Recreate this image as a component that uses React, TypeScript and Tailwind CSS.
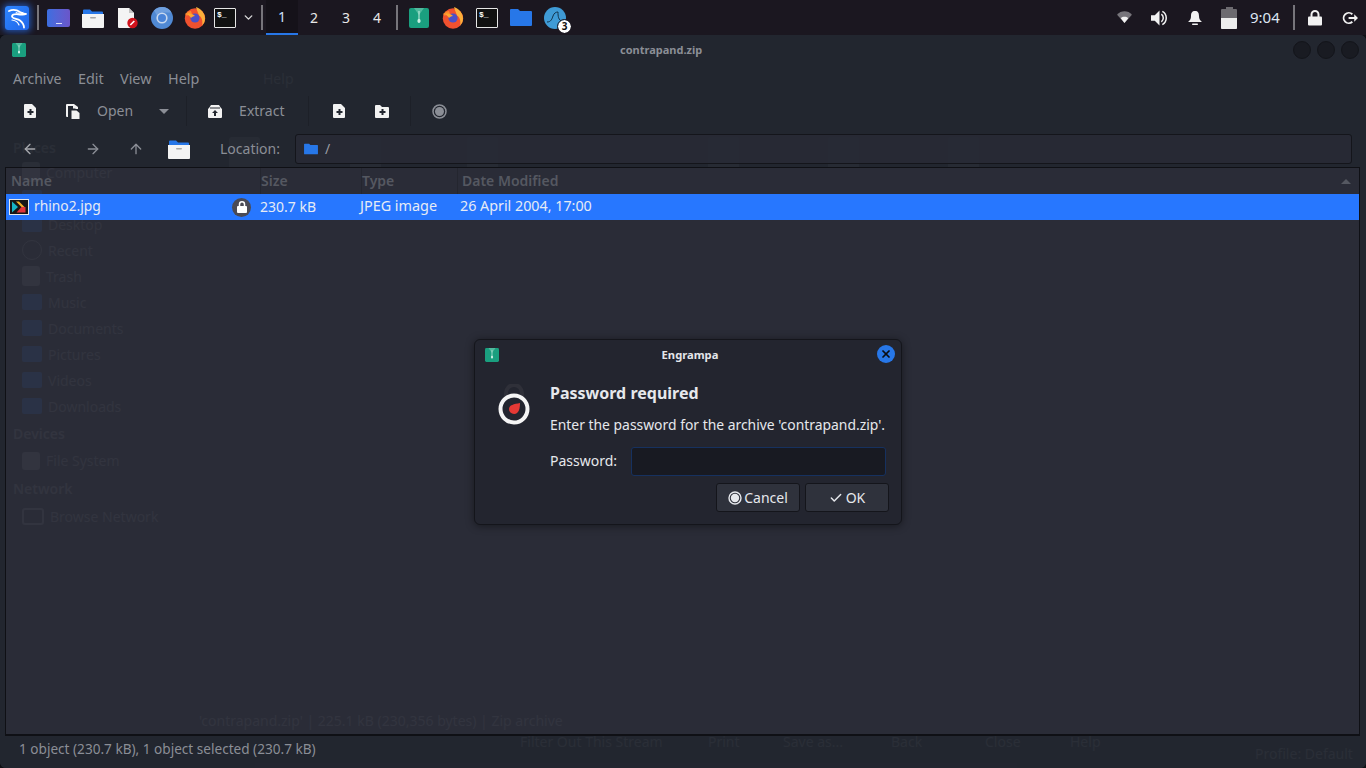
import { ArrowLeft, ArrowRight, ArrowUp, Check, ChevronDown, X } from "lucide-react";

const sidebarGhost = [
  { label: "Computer", icon: "file" },
  { label: "", icon: "folder" },
  { label: "Desktop", icon: "folder" },
  { label: "Recent", icon: "circle" },
  { label: "Trash", icon: "file" },
  { label: "Music", icon: "folder" },
  { label: "Documents", icon: "folder" },
  { label: "Pictures", icon: "folder" },
  { label: "Videos", icon: "folder" },
  { label: "Downloads", icon: "folder" },
];

const ghostDocs = ["left-[229px]", "left-[350px]", "left-[467px]", "left-[708px]", "left-[828px]", "left-[948px]"];

function KaliLogo() {
  return (
    <div className="w-6 h-6 rounded-[3px] bg-gradient-to-br from-[#2f86ff] to-[#1f66ea] shadow-[0_0_6px_2px_rgba(39,119,255,0.6)] flex items-center justify-center">
      <svg width="22" height="22" viewBox="0 0 22 22" fill="none" stroke="#fff" strokeWidth="1.8" strokeLinecap="round" strokeLinejoin="round">
        <path d="M3 4c4-2 8-1 11 1 2 1 3 2 6 2-2 1-4 .5-6 .5-3-.5-7-1-8 1.500-.5 3 5 2.500 8 4.500 2.500 2 4 4 4 7" />
        <path d="M10 5.500c2 1 5 1 7 0" strokeWidth="1" />
        <path d="M6 13c3 .5 6 2 7 5" strokeWidth="1.200" />
      </svg>
    </div>
  );
}

function MonitorIcon() {
  return (
    <div className="w-[23px] h-[18px] rounded-[2px] bg-gradient-to-r from-[#3b6ee0] to-[#6a56c9] flex items-end justify-center">
      <span className="w-[6px] h-[1px] mb-[3px] bg-white/80" />
    </div>
  );
}

function FilesIcon({ size = 22 }: { size?: number }) {
  return (
    <svg width={size} height={size} viewBox="0 0 22 22">
      <path d="M1 3.500a1 1 0 0 1 1-1h6l2 2h10a1 1 0 0 1 1 1V9H1z" fill="#2777e8" />
      <path d="M0 7h22v13a1 1 0 0 1-1 1H1a1 1 0 0 1-1-1z" fill="#f4f4f4" />
      <rect x="8" y="10" width="6" height="1.600" rx="0.800" fill="#a8a8a8" />
    </svg>
  );
}

function RedDocIcon() {
  return (
    <svg width="22" height="22" viewBox="0 0 22 22">
      <path d="M1 1h11l5 5v15H2a1 1 0 0 1-1-1z" fill="#f4f4f4" />
      <path d="M12 1l5 5h-5z" fill="#c4c4c4" />
      <circle cx="15.500" cy="16" r="5.200" fill="#d0121b" />
      <path d="M13.300 18l4-4" stroke="#fff" strokeWidth="1.600" />
    </svg>
  );
}

function ChromiumIcon() {
  return (
    <svg width="22" height="22" viewBox="0 0 22 22">
      <circle cx="11" cy="11" r="11" fill="#5089d4" />
      <path d="M11 0a11 11 0 0 1 9.500 5.500H11a5.500 5.500 0 0 0-5 3L3 3.600A11 11 0 0 1 11 0z" fill="#6f9fde" />
      <circle cx="11" cy="11" r="5.600" fill="#c9d9ef" />
      <circle cx="11" cy="11" r="4" fill="#4a84d8" />
    </svg>
  );
}

function FirefoxIcon() {
  return (
    <svg width="22" height="23" viewBox="0 0 22 23">
      <circle cx="11" cy="12.500" r="10.200" fill="#f0512f" />
      <path d="M12 1c5 2 9 6 9 11.500 0 3-1 5-3 7 1-4 0-8-3-10-1-3-2-5-3-8.500z" fill="#fbb03a" />
      <path d="M1 8c2-2 4-3 6-3l1 3C6 8 4 8 3 10z" fill="#fb8a2c" />
      <circle cx="11" cy="12" r="4.600" fill="#4a50c8" />
      <path d="M3 8c3-1 6 0 8 2-2 0-3 1-4 2-1-2-3-3-4-4z" fill="#ffa62e" />
    </svg>
  );
}

function TerminalIcon() {
  return (
    <div className="w-[22px] h-[20px] bg-[#111] border border-[#e6e6e6] rounded-[1px] flex items-start pl-[2px] pt-[1px]">
      <span className="font-['Liberation_Mono',monospace] font-bold text-[8px] leading-[9px] text-white">$_</span>
    </div>
  );
}

function ZipIcon({ size = 20 }: { size?: number }) {
  return (
    <svg width={size} height={size} viewBox="0 0 20 20">
      <rect width="20" height="20" rx="2" fill="#1a9f7f" />
      <path d="M5 0l5 7 5-7z" fill="#7fd0b8" opacity="0.550" />
      <rect x="9" y="3" width="2" height="9" fill="#c9efe3" opacity="0.500" />
      <rect x="8.500" y="11" width="3" height="4" rx="1.400" fill="#c9efe3" />
    </svg>
  );
}

function FolderBlue({ w = 22, h = 19 }: { w?: number; h?: number }) {
  return (
    <svg width={w} height={h} viewBox="0 0 22 19">
      <path d="M0 2a1 1 0 0 1 1-1h7l2 2h11a1 1 0 0 1 1 1v13a1 1 0 0 1-1 1H1a1 1 0 0 1-1-1z" fill="#2777e8" />
    </svg>
  );
}

function SharkIcon() {
  return (
    <div className="relative w-[22px] h-[22px]">
      <svg width="22" height="22" viewBox="0 0 22 22">
        <circle cx="11" cy="11" r="11" fill="#3f9bd6" />
        <path d="M3 15c4 0 5-3 6-6s3-4 5-4c0 4 0 8 5 10" fill="none" stroke="#12324a" strokeWidth="1" />
      </svg>
      <span className="absolute -right-[5px] -bottom-[4px] w-[13px] h-[13px] rounded-full bg-white outline outline-1 outline-[#1b1720] text-[#111] text-[10px] font-bold leading-[13px] text-center">3</span>
    </div>
  );
}

function Sep() {
  return <div className="w-[2px] h-[25px] bg-[#77757b]" />;
}

function Slot({ w, children }: { w: string; children: React.ReactNode }) {
  return <div className={`${w} flex items-center justify-center shrink-0`}>{children}</div>;
}

function TopPanel() {
  return (
    <div className="h-[35px] bg-[#1b1720] flex items-center text-[#e8e8e8] shrink-0">
      <Slot w="w-[34px]"><KaliLogo /></Slot>
      <Slot w="w-[8px]"><Sep /></Slot>
      <Slot w="w-[33px]"><MonitorIcon /></Slot>
      <Slot w="w-[36px]"><FilesIcon /></Slot>
      <Slot w="w-[34px]"><RedDocIcon /></Slot>
      <Slot w="w-[33px]"><ChromiumIcon /></Slot>
      <Slot w="w-[34px]"><FirefoxIcon /></Slot>
      <Slot w="w-[26px]"><TerminalIcon /></Slot>
      <Slot w="w-[20px]"><ChevronDown size={13} strokeWidth={2.6} className="text-[#d8d8d8]" /></Slot>
      <Slot w="w-[8px]"><Sep /></Slot>
      <div className="w-[32px] h-[35px] bg-[#151219] border-b-2 border-[#2777e8] flex items-center justify-center text-[14px] text-[#cfe0ff]">1</div>
      <div className="w-[32px] text-center text-[14px]">2</div>
      <div className="w-[32px] text-center text-[14px]">3</div>
      <div className="w-[30px] text-center text-[14px]">4</div>
      <Slot w="w-[10px]"><Sep /></Slot>
      <Slot w="w-[34px]"><ZipIcon /></Slot>
      <Slot w="w-[34px]"><FirefoxIcon /></Slot>
      <Slot w="w-[34px]"><TerminalIcon /></Slot>
      <Slot w="w-[34px]"><FolderBlue /></Slot>
      <Slot w="w-[34px]"><SharkIcon /></Slot>

      <div className="ml-auto flex items-center">
        <svg width="15" height="13" viewBox="0 0 16 14" className="mr-[19px]">
          <path d="M0 4C4-1 12-1 16 4L8 13z" fill="#77757b" />
          <path d="M4 7.800c2-2 6-2 8 0L8 13z" fill="#f2f2f2" />
        </svg>
        <svg width="17" height="18" viewBox="0 0 18 18" className="mr-[20px]">
          <path d="M0 6h4l5-5v16l-5-5H0z" fill="#f2f2f2" />
          <path d="M11 5a5 5 0 0 1 0 8M12 2a8 8 0 0 1 0 14" fill="none" stroke="#f2f2f2" strokeWidth="1.600" />
        </svg>
        <svg width="14" height="16" viewBox="0 0 14 16" className="mr-[19px]">
          <path d="M7 1c3 0 4 2 4 5 0 3 1 4 3 6H0c2-2 3-3 3-6 0-3 1-5 4-5z" fill="#f2f2f2" />
          <rect x="4" y="13.500" width="6" height="1.500" rx="0.700" fill="#f2f2f2" />
        </svg>
        <div className="flex flex-col items-center mr-[13px]">
          <span className="w-[7px] h-[2px] bg-[#6d6b70]" />
          <div className="w-[16px] h-[20px] rounded-[1px] bg-[#6d6b70] flex flex-col justify-end overflow-hidden">
            <span className="h-[11px] bg-[#ededed]" />
          </div>
        </div>
        <span className="text-[15px] text-[#dde6f2] w-[31px] mr-[12px] whitespace-nowrap">9:04</span>
        <Sep />
        <svg width="14" height="16" viewBox="0 0 14 16" className="ml-[13px]">
          <path d="M3.500 7V4.500a3.500 3.500 0 0 1 7 0V7" fill="none" stroke="#f2f2f2" strokeWidth="2" />
          <rect y="6.500" width="14" height="9" rx="1" fill="#f2f2f2" />
        </svg>
        <svg width="16" height="16" viewBox="0 0 17 16" className="ml-[20px] mr-[8px]">
          <path d="M11 4a5.500 5.500 0 1 0 0 8" fill="none" stroke="#f2f2f2" strokeWidth="2" />
          <path d="M7 7h6V4l4 4-4 4V9H7z" fill="#f2f2f2" />
        </svg>
      </div>
    </div>
  );
}

function DocPlus() {
  return (
    <svg width="13" height="14" viewBox="0 0 13 14">
      <path d="M1 0h7l4 4v9a1 1 0 0 1-1 1H1a1 1 0 0 1-1-1V1a1 1 0 0 1 1-1z" fill="#f2f2f2" />
      <path d="M5.500 5h2v2h2v2h-2v2h-2V9h-2V7h2z" fill="#22262f" />
    </svg>
  );
}

function FolderPlus() {
  return (
    <svg width="14" height="13" viewBox="0 0 14 13">
      <path d="M0 1a1 1 0 0 1 1-1h4l2 2h6a1 1 0 0 1 1 1v9a1 1 0 0 1-1 1H1a1 1 0 0 1-1-1z" fill="#f2f2f2" />
      <path d="M6.500 4h2v2h2v2h-2v2h-2V8h-2V6h2z" fill="#22262f" />
    </svg>
  );
}

function ToolSep({ ml }: { ml: string }) {
  return <div className={`${ml} w-px self-stretch my-[4px] bg-[#1d2028]`} />;
}

function Toolbar() {
  return (
    <div className="h-[38px] flex items-center text-[14px] text-[#8b8e96] shrink-0">
      <div className="ml-[24px] w-[13px] flex"><DocPlus /></div>
      <svg width="15" height="15" viewBox="0 0 15 15" className="ml-[29px]">
        <path d="M1 0h7l4 3v10H1a1 1 0 0 1-1-1V1a1 1 0 0 1 1-1z" fill="#f2f2f2" />
        <path d="M2 2h5v2.500h2.500V5H4v8H2z" fill="#22262f" />
        <path d="M4 5h10v10H4z" fill="#22262f" />
        <path d="M5.500 6.500h5l3 2.500v6h-8z" fill="#f2f2f2" />
      </svg>
      <span className="ml-[16px] pb-[2px]">Open</span>
      <span className="ml-[26px] w-0 h-0 border-x-[5px] border-x-transparent border-t-[5px] border-t-[#8b8e96]" />
      <ToolSep ml="ml-[17px]" />
      <svg width="14" height="13" viewBox="0 0 14 13" className="ml-[21px]">
        <path d="M1 3l2-3h8l2 3 1 1v8a1 1 0 0 1-1 1H1a1 1 0 0 1-1-1V4z" fill="#f2f2f2" />
        <path d="M7 5l3 3H8v3H6V8H4z" fill="#22262f" />
        <path d="M2 3h10" stroke="#22262f" />
      </svg>
      <span className="ml-[17px] pb-[2px]">Extract</span>
      <ToolSep ml="ml-[24px]" />
      <div className="ml-[24px] flex"><DocPlus /></div>
      <div className="ml-[29px] flex"><FolderPlus /></div>
      <ToolSep ml="ml-[21px]" />
      <svg width="15" height="15" viewBox="0 0 15 15" className="ml-[21px]">
        <circle cx="7.500" cy="7.500" r="6.500" fill="none" stroke="#8b8e96" strokeWidth="1.500" />
        <circle cx="7.500" cy="7.500" r="4.500" fill="#8b8e96" />
      </svg>
    </div>
  );
}

function LocationBar() {
  return (
    <div className="h-[37px] flex items-center text-[14px] text-[#8b8e96] shrink-0">
      <ArrowLeft size={16} strokeWidth={2} className="ml-[22px] text-[#a6a8ad]" />
      <ArrowRight size={16} strokeWidth={2} className="ml-[47px] text-[#8b8e96]" />
      <ArrowUp size={16} strokeWidth={2} className="ml-[27px] text-[#8b8e96]" />
      <div className="ml-[24px] flex"><FilesIcon size={22} /></div>
      <span className="ml-[30px]">Location:</span>
      <div className="ml-[15px] mr-[14px] flex-1 h-[30px] rounded-[3px] border border-[#14151b] bg-[#282a35]/90 flex items-center pl-[8px]">
        <FolderBlue w={14} h={12} />
        <span className="ml-[7px] text-[#9a9ca3]">/</span>
      </div>
    </div>
  );
}

function FileTable() {
  return (
    <div className="flex-1 border border-[#0f1015] border-b-2 bg-[#2a2c37]/92 flex flex-col min-h-0">
      <div className="h-[26px] flex text-[14px] font-semibold text-[#555861] shrink-0">
        <span className="w-[255px] pl-[5px] pb-[2px] flex items-center border-r border-[#24262f]">Name</span>
        <span className="w-[101px] pb-[2px] flex items-center border-r border-[#24262f]">Size</span>
        <span className="w-[96px] pb-[2px] flex items-center border-r border-[#24262f]">Type</span>
        <span className="pl-[4px] pb-[2px] flex items-center">Date Modified</span>
        <span className="ml-auto mr-[8px] self-center w-0 h-0 border-x-[5px] border-x-transparent border-b-[5px] border-b-[#555861]" />
      </div>
      <div className="h-[26px] bg-[#2777ff] flex items-center text-[14px] text-[#e6ebf5] shrink-0">
        <svg width="20" height="16" viewBox="0 0 20 16" className="ml-[3px]">
          <rect x="0.500" y="0.500" width="19" height="15" fill="#161616" stroke="#e8e8e8" />
          <path d="M3 2.500L9 8l-6 5.500z" fill="#17b3c4" />
          <path d="M7 2.500h3L15.500 8H12.500z" fill="#f3b027" />
          <path d="M12.500 8h4v5.500h-9z" fill="#e0343a" />
        </svg>
        <span className="ml-[5px] w-[198px] pb-[2px] text-[13.8px]">rhino2.jpg</span>
        <div className="w-[19px] h-[19px] rounded-full bg-[#4a4a55] flex items-center justify-center">
          <svg width="10" height="12" viewBox="0 0 10 12">
            <path d="M2.500 5.500V3.300a2.500 2.500 0 0 1 5 0V5.500" fill="none" stroke="#fff" strokeWidth="1.500" />
            <rect y="5" width="10" height="7" rx="1" fill="#fff" />
          </svg>
        </div>
        <span className="ml-[9px] w-[100px] pb-[2px]">230.7 kB</span>
        <span className="w-[100px] pb-[2px] text-[14.4px]">JPEG image</span>
        <span className="pb-[2px] text-[14.3px]">26 April 2004, 17:00</span>
      </div>
    </div>
  );
}

// what shows faintly through the translucent window
function GhostLayer() {
  return (
    <div className="absolute inset-0 pointer-events-none text-[14px] text-[#8a8a94]">
      <span className="absolute left-[263px] top-[33px]">Help</span>
      {ghostDocs.map((left) => (
        <span key={left} className={`absolute ${left} top-[102px] w-[31px] h-[30px] rounded-t-[3px] bg-[#6c6c76]`} />
      ))}
      <div className="absolute left-[13px] top-[102px] w-[200px]">
        <div className="font-semibold h-[22px]">Places</div>
        <div className="flex flex-col pl-[9px]">
          {sidebarGhost.map((s, i) => (
            <div key={i} className="h-[26px] flex items-center gap-[6px]">
              <span className={s.icon === "circle" ? "w-[20px] h-[20px] rounded-full border border-[#8a8a94]" : s.icon === "folder" ? "w-[20px] h-[16px] rounded-[2px] bg-[#2777e8]" : "w-[18px] h-[20px] rounded-[3px] bg-[#8a8a94]"} />
              <span>{s.label}</span>
            </div>
          ))}
        </div>
        <div className="font-semibold mt-[1px] h-[27px] flex items-center">Devices</div>
        <div className="pl-[9px] h-[27px] flex items-center gap-[6px]">
          <span className="w-[18px] h-[18px] rounded-[3px] bg-[#8a8a94]" />
          <span>File System</span>
        </div>
        <div className="font-semibold h-[29px] flex items-center">Network</div>
        <div className="pl-[9px] h-[26px] flex items-center gap-[6px]">
          <span className="w-[22px] h-[17px] rounded-[3px] border-2 border-[#8a8a94]" />
          <span>Browse Network</span>
        </div>
      </div>
      <span className="absolute left-[199px] top-[675px] whitespace-nowrap">'contrapand.zip' | 225.1 kB (230,356 bytes) | Zip archive</span>
      <span className="absolute left-[520px] top-[696px] whitespace-nowrap">Filter Out This Stream</span>
      <span className="absolute left-[708px] top-[696px]">Print</span>
      <span className="absolute left-[783px] top-[696px]">Save as...</span>
      <span className="absolute left-[891px] top-[696px]">Back</span>
      <span className="absolute left-[985px] top-[696px]">Close</span>
      <span className="absolute left-[1070px] top-[696px]">Help</span>
      <span className="absolute left-[1255px] top-[708px] whitespace-nowrap">Profile: Default</span>
    </div>
  );
}

function PasswordDialog() {
  return (
    <div className="absolute left-[474px] top-[339px] w-[428px] h-[186px] rounded-[6px] border border-[#14151b] bg-[#23252f] shadow-[0_1px_8px_rgba(0,0,0,0.45)] text-[#e6e8ec] flex flex-col">
      <div className="h-[30px] flex items-center relative shrink-0">
        <div className="ml-[10px] flex"><ZipIcon size={14} /></div>
        <span className="absolute left-0 right-[-4px] text-center text-[11.200px] font-bold text-[#e4e6ea]">Engrampa</span>
        <div className="absolute left-[402px] top-[5px] w-[18px] h-[18px] rounded-full bg-[#2777e8] flex items-center justify-center">
          <X size={12} strokeWidth={3.5} className="text-[#0b0d14]" />
        </div>
      </div>
      <div className="flex flex-1">
        <svg width="32" height="42" viewBox="0 0 32 42" className="ml-[23px] mt-[14px] shrink-0">
          <path d="M8 14V9a8 8 0 0 1 16 0v5" fill="none" stroke="#2f3039" strokeWidth="4" />
          <circle cx="16" cy="25" r="13.500" fill="#23252f" stroke="#f5f5f5" strokeWidth="4" />
          <path d="M22 19c0 5-1 11-6 11a5 5 0 0 1-5-5c0-4 5-5 11-6z" fill="#e53935" />
        </svg>
        <div className="ml-[20px] flex flex-col flex-1 min-w-0">
          <h1 className="text-[16px] font-bold leading-[22px] mt-[12px]">Password required</h1>
          <p className="text-[13.900px] leading-[20px] mt-[11px] whitespace-nowrap">Enter the password for the archive 'contrapand.zip'.</p>
          <div className="flex items-center mt-[12px] mr-[15px]">
            <span className="text-[14px] w-[81px] pb-[2px]">Password:</span>
            <div className="flex-1 h-[29px] rounded-[3px] border border-[#16315f] bg-[#181a22]" />
          </div>
          <div className="flex justify-end gap-[5px] mt-[7px] mr-[12px]">
            <button className="w-[84px] h-[29px] rounded-[3px] border border-[#14151b] bg-[#2f323c] flex items-center justify-center gap-[2px] text-[14px]">
              <svg width="14" height="14" viewBox="0 0 14 14">
                <circle cx="7" cy="7" r="6" fill="none" stroke="#e6e8ec" strokeWidth="1.400" />
                <circle cx="7" cy="7" r="4.200" fill="#e6e8ec" />
              </svg>
              Cancel
            </button>
            <button className="w-[84px] h-[29px] rounded-[3px] border border-[#14151b] bg-[#2f323c] flex items-center justify-center gap-[3px] text-[14px]">
              <Check size={14} strokeWidth={2.5} />
              OK
            </button>
          </div>
        </div>
      </div>
    </div>
  );
}

export default function App() {
  return (
    <div className="relative w-[1366px] h-[768px] overflow-hidden bg-[#0f1015] flex flex-col font-['Noto_Sans',sans-serif]">
      <TopPanel />
      <div className="relative flex-1 min-h-0 rounded-[6px] overflow-hidden bg-[#2a2c37]">
        <GhostLayer />
        <div className="relative h-full flex flex-col">
          <div className="bg-[#22262f]/92 shrink-0">
            <div className="h-[30px] flex items-center">
              <div className="ml-[12px] flex"><ZipIcon size={14} /></div>
              <span className="ml-[594px] text-[11px] font-bold text-[#8b8e96]">contrapand.zip</span>
              <div className="ml-auto mr-[7px] flex gap-[6px]">
                <span className="w-[18px] h-[18px] rounded-full bg-[#191b22] border border-[#14151b]" />
                <span className="w-[18px] h-[18px] rounded-full bg-[#191b22] border border-[#14151b]" />
                <span className="w-[18px] h-[18px] rounded-full bg-[#191b22] border border-[#14151b]" />
              </div>
            </div>
            <div className="h-[27px] flex items-center pl-[13px] text-[14.400px] text-[#8b8e96]">
              <span className="w-[65px] text-[14px]">Archive</span>
              <span className="w-[42px]">Edit</span>
              <span className="w-[48px]">View</span>
              <span>Help</span>
            </div>
            <Toolbar />
            <LocationBar />
          </div>
          <div className="flex-1 min-h-0 flex">
            <div className="w-[5px] bg-[#22262f]/92" />
            <FileTable />
            <div className="w-[6px] bg-[#22262f]/92" />
          </div>
          <div className="h-[32px] bg-[#22262f]/92 flex items-center pl-[19px] pb-[6px] text-[13.600px] text-[#8b8e96] shrink-0">
            1 object (230.7 kB), 1 object selected (230.7 kB)
          </div>
        </div>
      </div>
      <PasswordDialog />
    </div>
  );
}
